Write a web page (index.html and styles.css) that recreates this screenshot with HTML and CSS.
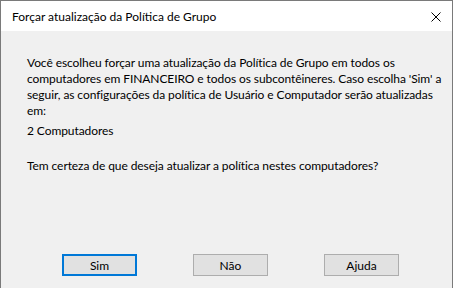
FILE: index.html
```html
<!DOCTYPE html>
<html lang="pt-BR">
<head>
    <meta charset="UTF-8">
    <title>Forçar atualização da Política de Grupo</title>
    <link rel="stylesheet" href="styles.css">
</head>
<body>
    <div class="dialog">
        <div class="title-bar">
            <span class="title">Forçar atualização da Política de Grupo</span>
            <button class="close-btn" aria-label="Fechar">
                <svg width="10" height="10" viewBox="0 0 10 10">
                    <path d="M0.5 0.5L9.5 9.5M9.5 0.5L0.5 9.5" stroke="#000" stroke-width="1" fill="none"/>
                </svg>
            </button>
        </div>

        <div class="dialog-body">
            <p class="message">
                Você escolheu forçar uma atualização da Política de Grupo em todos os<br>
                computadores em FINANCEIRO e todos os subcontêineres. Caso escolha 'Sim' a<br>
                seguir, as configurações da política de Usuário e Computador serão atualizadas<br>
                em:
            </p>
            <p class="count">2 Computadores</p>
            <p class="question">Tem certeza de que deseja atualizar a política nestes computadores?</p>

            <div class="actions">
                <button class="btn btn-default">Sim</button>
                <button class="btn">Não</button>
                <button class="btn">Ajuda</button>
            </div>
        </div>
    </div>
</body>
</html>
```

FILE: styles.css
```css
* {
    margin: 0;
    padding: 0;
    box-sizing: border-box;
}

body {
    width: 453px;
    height: 288px;
    overflow: hidden;
    font-family: "Segoe UI", Lato, "Noto Sans", sans-serif;
    font-size: 12px;
    color: #000;
    background: #f0f0f0;
}

.dialog {
    height: 288px;
    border: 1px solid #7a7a7a;
    border-bottom: none;
    background: #f0f0f0;
    display: flex;
    flex-direction: column;
}

.title-bar {
    height: 30px;
    flex-shrink: 0;
    background: #fff;
    display: flex;
    align-items: center;
    justify-content: space-between;
    padding-left: 11px;
}

.title {
    font-size: 12px;
}

.close-btn {
    width: 32px;
    height: 30px;
    border: none;
    background: transparent;
    display: flex;
    align-items: center;
    justify-content: center;
    padding-top: 1px;
}

.close-btn svg {
    display: block;
}

.dialog-body {
    flex: 1;
    padding: 24px 26px 0;
    display: flex;
    flex-direction: column;
}

.message,
.count,
.question {
    line-height: 16px;
    white-space: nowrap;
    letter-spacing: -0.08px;
}

.count {
    margin-top: 4px;
}

.question {
    margin-top: 19px;
}

.actions {
    display: flex;
    gap: 56px;
    margin-top: 80px;
    padding-left: 35px;
}

.btn {
    width: 75px;
    height: 22px;
    flex-shrink: 0;
    border: 1px solid #adadad;
    background: #e1e1e1;
    font-family: inherit;
    font-size: 12px;
    color: #000;
}

.btn-default {
    border: 2px solid #0078d7;
}
```
